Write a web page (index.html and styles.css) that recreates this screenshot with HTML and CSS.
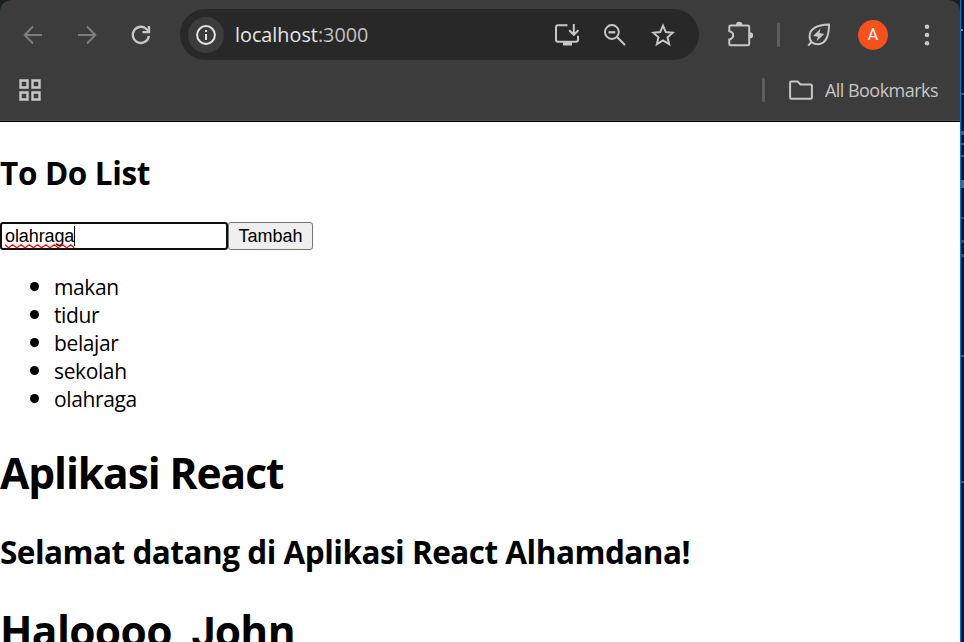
FILE: index.html
```html
<!DOCTYPE html>
<html lang="id">
<head>
<meta charset="utf-8">
<title>React App</title>
<link rel="stylesheet" href="styles.css">
</head>
<body>
<div class="desktop">
  <div class="window">
    <header class="chrome">
      <div class="toolbar">
        <nav class="nav">
          <svg class="ic dim" viewBox="0 0 24 24"><path d="M21 12H4M12 3.500L3.700 12l8.300 8.500"/></svg>
          <svg class="ic dim" viewBox="0 0 24 24"><path d="M3 12h17M12 3.500l8.300 8.500-8.300 8.500"/></svg>
          <svg class="ic" viewBox="0 0 24 24"><path class="thick" d="M19.900 13A8.100 8.100 0 1 1 17.800 6.300L20 8.500M20 3v6.200h-6.600"/></svg>
        </nav>
        <div class="omnibox">
          <span class="site"><svg class="info" viewBox="0 0 24 24"><circle cx="12" cy="12" r="8.900"/><path d="M12 11v6M12 7v2"/></svg></span>
          <span class="url">localhost<span class="port">:3000</span></span>
          <span class="actions">
            <svg class="ic" viewBox="0 0 24 24"><path d="M12.500 2.200H3a2 2 0 0 0-2 2v12.600a2 2 0 0 0 2 2h18a2 2 0 0 0 2-2v-4M18.800 1v10.500M14.200 7.200l4.600 4.600 4.600-4.600"/><path class="fill" d="M8 19h9v3.500H8z"/></svg>
            <svg class="ic" viewBox="0 0 24 24"><circle cx="8.900" cy="9" r="6.900"/><path d="M14 14l8 8"/><path class="thick" d="M5.500 9.300h6.800"/></svg>
            <svg class="ic" viewBox="0 0 24 24"><path d="M12 2.700l2.800 6.400 7 .6-5.300 4.600 1.600 6.800-6.100-3.600-6.100 3.600 1.600-6.800-5.300-4.600 7-.6z"/></svg>
          </span>
        </div>
        <svg class="ic ext" viewBox="0 0 28 28"><path d="M5.500 4.500H23q1.200 0 1.200 1.200V23q0 1.200-1.200 1.200H5.500q-1.200 0-1.200-1.200v-4.600q3.900-.8 3.900-4.100T4.300 10.200V5.700q0-1.200 1.200-1.200z"/><path class="fill" d="M11 4a3.200 3.200 0 0 1 6.400 0zM25 11.200a3.200 3.200 0 0 1 0 6.400z"/></svg>
        <i class="rule"></i>
        <svg class="ic leaf" viewBox="0 0 24 24"><path d="M22 1.600C11 2 3 4.500 2.600 13c-.2 5.500 3.400 8.400 8.400 8.300C19.500 21 21.900 13 22 1.600zM1.200 22.600l3.500-3.800"/><path class="fill" d="M13.700 5.500L6 12.900l5 .8-1.500 4.500 7.800-7.200-4.900-.9z"/></svg>
        <span class="avatar">A</span>
        <svg class="ic more" viewBox="0 0 24 24"><g class="fill"><circle cx="12" cy="3.700" r="2.300"/><circle cx="12" cy="12" r="2.300"/><circle cx="12" cy="20.300" r="2.300"/></g></svg>
      </div>
      <div class="bookmarks">
        <svg class="apps" viewBox="0 0 22 22"><path d="M1.500 1.500h7v7h-7zM13.500 1.500h7v7h-7zM1.500 13.500h7v7h-7zM13.500 13.500h7v7h-7z"/></svg>
        <div class="all">
          <i class="rule"></i>
          <svg class="ic folder" viewBox="0 0 24 24"><path d="M2.300 3.400h6.300l2.800 3h10.300q1.200 0 1.200 1.200v11.900q0 1.200-1.200 1.200H2.300q-1.200 0-1.200-1.200V4.600q0-1.200 1.200-1.200z"/></svg>
          <span class="label">All Bookmarks</span>
        </div>
      </div>
    </header>
    <main class="page">
      <h2 class="todo-title">To Do List</h2>
      <div class="form">
        <div class="field"><span class="typed">olahraga<svg class="squiggle" viewBox="0 0 70 5"><path d="M0 .8l3.500 3L7.700 .8l4 3L16 .8l4 3L24.300 .8l4 3L32.600 .8l4 3L40.900 .8l4 3L49.200 .8l4 3L57.500 .8l4 3L65.800 .8l3.500 3"/></svg></span><i class="caret"></i></div>
        <button class="add">Tambah</button>
      </div>
      <ul class="list">
        <li>makan</li>
        <li>tidur</li>
        <li>belajar</li>
        <li>sekolah</li>
        <li>olahraga</li>
      </ul>
      <h1 class="app-title">Aplikasi React</h1>
      <h2 class="welcome">Selamat datang di Aplikasi React Alhamdana!</h2>
      <h1 class="hello">Haloooo<span class="alt">, J</span>ohn</h1>
    </main>
  </div>
  <aside class="behind"></aside>
</div>
</body>
</html>
```
FILE: styles.css
```css
* { box-sizing: border-box; }
body { margin: 0; width: 964px; height: 642px; overflow: hidden; background: #fff; color: #000; font-family: "Open Sans", sans-serif; }
.desktop { display: flex; width: 964px; height: 642px; background: #1c1f1f; }
.window { width: 960px; height: 642px; overflow: hidden; flex: none; }
.chrome { height: 122px; background: #3c3c3c; border-bottom: 1px solid #000; border-radius: 12px 12px 0 0; box-shadow: inset 0 -1px #505050; }
.toolbar { display: flex; align-items: center; height: 70px; }
.nav { display: flex; gap: 30px; padding-left: 21px; width: 180px; }
svg { display: block; flex: none; }
.ic { width: 24px; height: 24px; fill: none; stroke: #c7c7c7; stroke-width: 2; }
.dim { stroke: #7d7d7d; }
.thick { stroke-width: 2.3; }
.fill { fill: #c7c7c7; stroke: none; }
.omnibox { display: flex; align-items: center; width: 519px; height: 51px; margin-top: -1px; border-radius: 26px; background: #282828; }
.site { display: flex; align-items: center; justify-content: center; width: 36px; height: 36px; margin-left: 8px; border-radius: 50%; background: #3c3c3c; }
.info { width: 24px; height: 24px; fill: none; stroke: #e3e3e3; stroke-width: 2; }
.url { margin-left: 11px; width: 150px; font-size: 19.8px; letter-spacing: 0; color: #e6e6e6; white-space: nowrap; }
.port { color: #c0c0c0; }
.actions { display: flex; gap: 24px; margin-left: 170px; }
.ext { width: 28px; height: 28px; margin-left: 26px; }
.rule { width: 3px; height: 24px; border-radius: 1px; background: #5d5d5d; }
.toolbar .rule { margin-left: 24px; }
.leaf { margin-left: 27px; }
.avatar { width: 30px; height: 30px; margin-left: 27px; border-radius: 50%; background: #f4511e; color: #fff; font: 16px/30px Roboto, sans-serif; text-align: center; }
.more { margin-left: 27px; }
.bookmarks { display: flex; align-items: center; justify-content: space-between; height: 40px; padding: 0 22px 0 19px; }
.apps { width: 22px; height: 22px; fill: none; stroke: #c7c7c7; stroke-width: 2.4; }
.all { display: flex; align-items: center; }
.folder { margin-left: 24px; }
.label { margin: -1px 0 0 12px; width: 113px; font-size: 18px; letter-spacing: -.54px; color: #c7c7c7; white-space: nowrap; }
.page { background: #fff; height: 520px; }
h1, h2 { margin: 0; font-weight: 700; white-space: nowrap; }
h2 { font-size: 31.5px; line-height: 44px; }
h1 { font-size: 42.5px; line-height: 58px; }
.todo-title { padding-top: 29px; letter-spacing: -.35px; }
.form { display: flex; margin-top: 27px; font-family: "Liberation Sans", sans-serif; font-size: 18px; }
.field { display: flex; align-items: center; width: 228px; height: 28px; border: 2px solid #101010; border-radius: 3px; padding-left: 3px; }
.typed { position: relative; line-height: 24px; letter-spacing: -.1px; }
.squiggle { position: absolute; left: 0; bottom: -1px; width: 70px; height: 5px; fill: none; stroke: #f00; stroke-width: 1.2; }
.caret { width: 1px; height: 20px; background: #000; }
.add { width: 85px; height: 28px; padding: 0; border: 1px solid #767676; border-radius: 3px; background: #efefef; color: #000; font: 18px/24px "Liberation Sans", sans-serif; }
.list { margin: 22px 0 0; padding-left: 54px; font-size: 21px; line-height: 28px; letter-spacing: -.38px; }
.list li { height: 28px; }
.list li::marker { font-size: 24px; }
.app-title { margin-top: 32px; letter-spacing: -1.08px; }
.welcome { margin-top: 28px; letter-spacing: -.5px; }
.hello { margin-top: 28px; letter-spacing: -.65px; }
.alt { font-family: Roboto, sans-serif; }
.behind { width: 4px; border-left: 1px solid #0078d4; background-color: #141517; background-origin: padding-box; background-repeat: no-repeat; background-image: linear-gradient(#a86, #a86), linear-gradient(#555, #555), linear-gradient(#555, #555), linear-gradient(#555, #555), linear-gradient(#555, #555), linear-gradient(#666, #666), linear-gradient(#544, #544), linear-gradient(#543, #543), linear-gradient(#543, #543), linear-gradient(#555, #555), linear-gradient(#555, #555); background-position: 0 29px, 0 93px, 0 131px, 0 143px, 0 155px, 0 180px, 0 217px, 0 240px, 0 254px, 0 355px, 0 481px; background-size: 2px 2px, 3px 2px, 3px 4px, 3px 2px, 3px 2px, 3px 8px, 3px 2px, 3px 3px, 3px 3px, 3px 2px, 3px 2px; background-clip: border-box; }
```
